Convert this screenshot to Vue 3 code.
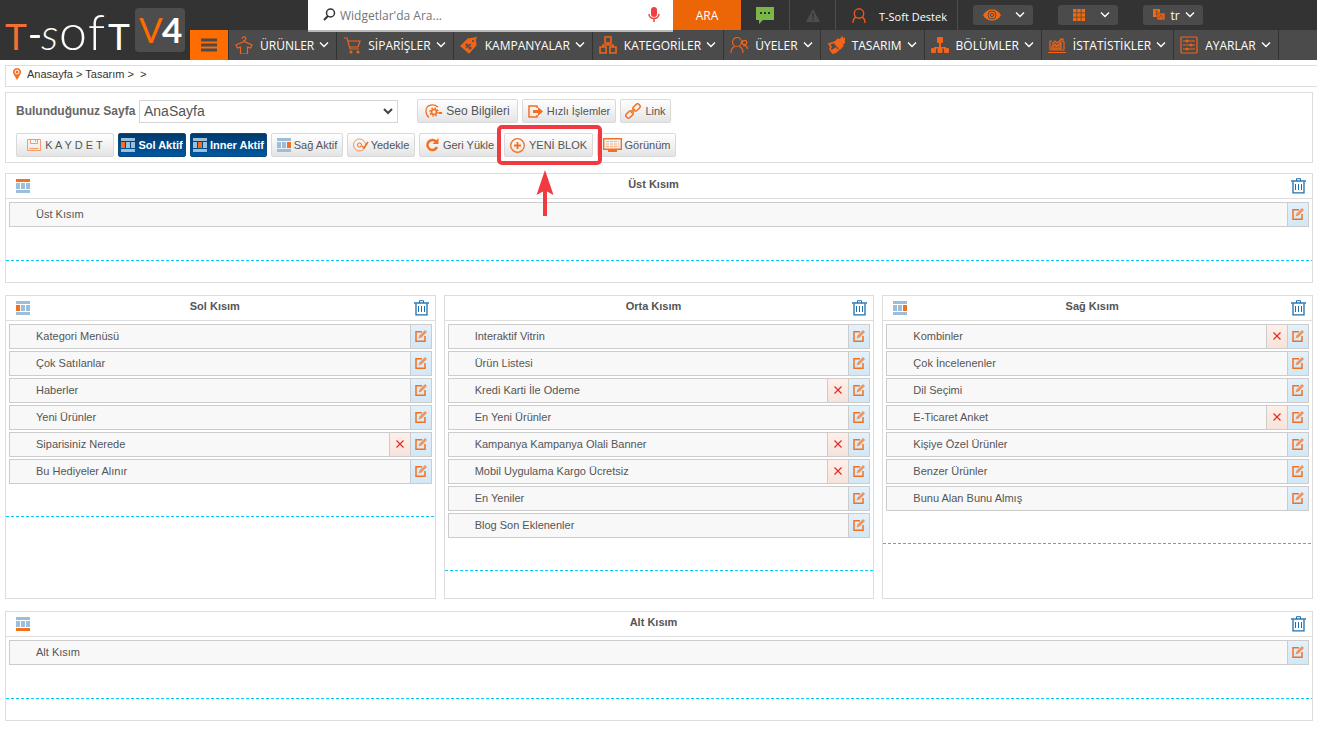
<script setup>
import { ref } from 'vue'

const search = ref('')
const page = ref('AnaSayfa')

const menu = [
  { label: 'ÜRÜNLER', icon: '<path d="M9 5.500V4.500a1.800 1.800 0 1 0-1.800-1.800M9 5.500 1 9l1.500 3 3-1v7h7v-7l3 1L17 9Z"/>' },
  { label: 'SİPARİŞLER', icon: '<path d="M1 2h3l3 11h9M5 5h12l-2 6H6"/><circle cx="8" cy="16" r="1" fill="currentColor"/><circle cx="15" cy="16" r="1" fill="currentColor"/>' },
  { label: 'KAMPANYALAR', icon: '<path fill="currentColor" d="M1 10 8 3l7-1 1 7-7 8Z"/><path d="m12 5 5-4"/><path stroke="#4b4b4b" d="m6 12 5-4"/><circle cx="7" cy="9" r="1" stroke="#4b4b4b"/><circle cx="10" cy="12" r="1" stroke="#4b4b4b"/><circle cx="13" cy="5" r="1" fill="#4b4b4b" stroke="none"/>' },
  { label: 'KATEGORİLER', icon: '<g stroke-width="1.600"><path d="M6 1h6v6H6ZM1 11h6v6H1ZM11 11h6v6h-6ZM9 7v2M4 11V9h10v2"/></g>' },
  { label: 'ÜYELER', icon: '<circle cx="7" cy="6" r="4.500"/><path d="M1 17c0-4 2-6 4-6.500M9 10.500c2 .500 4 2.500 4 6.500"/><circle cx="14.500" cy="6.500" r="2.200"/><path d="M13 10c3-1.500 4.500 1 4.500 3"/>' },
  { label: 'TASARIM', icon: '<path fill="currentColor" d="m8 6 3-3 2 1 2-3 1 2 2-1-1 3 1 1-3 3 1 1-3 3-5-5Z"/><path stroke-width="1.600" d="m8 6-6 2 2 3-1 2 3 4 3-1 4-4"/><path fill="currentColor" d="m4 15 5-3 1 3-4 2Z"/>' },
  { label: 'BÖLÜMLER', icon: '<g fill="currentColor" stroke="none"><rect x="6" y="1" width="6" height="6" rx="1"/><path d="M8 6h2v5h5v3h-2v-1.500H5V14H3v-3h5Z"/><rect x="0" y="12" width="5" height="5" rx="1"/><rect x="6.500" y="12" width="5" height="5" rx="1"/><rect x="13" y="12" width="5" height="5" rx="1"/></g>' },
  { label: 'İSTATİSTİKLER', icon: '<path d="M2 14V5h2M15 6h1v8M0 16.500h18M2 14h14"/><path fill="currentColor" fill-opacity=".6" d="m4 13v-3l3-2 2 2 4-4v7Z"/><path d="m4 8 3-3 2 2 5-4M12 3h3v3"/>' },
  { label: 'AYARLAR', icon: '<rect x="1" y="1" width="16" height="16" rx="1"/><path d="M3 5h3M8 5h7M3 9h7M12 9h3M3 13h3M8 13h7"/><circle cx="7" cy="5" r="1"/><circle cx="11" cy="9" r="1"/><circle cx="7" cy="13" r="1"/>' },
]

const R = (label, removable = false) => ({ label, removable })
const upper = { key: 'top', title: 'Üst Kısım', rows: [R('Üst Kısım')] }
const lower = { key: 'bottom', title: 'Alt Kısım', rows: [R('Alt Kısım')] }
const middle = [
  {
    key: 'left',
    title: 'Sol Kısım',
    rows: [R('Kategori Menüsü'), R('Çok Satılanlar'), R('Haberler'), R('Yeni Ürünler'), R('Siparisiniz Nerede', true), R('Bu Hediyeler Alınır')],
  },
  {
    key: 'none',
    title: 'Orta Kısım',
    rows: [R('Interaktif Vitrin'), R('Ürün Listesi'), R('Kredi Karti İle Odeme', true), R('En Yeni Ürünler'), R('Kampanya Kampanya Olali Banner', true), R('Mobil Uygulama Kargo Ücretsiz', true), R('En Yeniler'), R('Blog Son Eklenenler')],
  },
  {
    key: 'right',
    title: 'Sağ Kısım',
    rows: [R('Kombinler', true), R('Çok İncelenenler'), R('Dil Seçimi'), R('E-Ticaret Anket', true), R('Kişiye Özel Ürünler'), R('Benzer Ürünler'), R('Bunu Alan Bunu Almış')],
  },
]
const groups = [
  { name: 'full', panels: [upper] },
  { name: 'split', panels: middle },
  { name: 'full', panels: [lower] },
]

const parts = [
  { key: 'top', x: 0, y: 0, w: 14, h: 3 },
  { key: 'left', x: 0, y: 4, w: 4, h: 6 },
  { key: 'inner', x: 5, y: 4, w: 4, h: 6 },
  { key: 'right', x: 10, y: 4, w: 4, h: 6 },
  { key: 'bottom', x: 0, y: 11, w: 14, h: 3 },
]
const toggles = [
  { key: 'left', label: 'Sol Aktif', on: true },
  { key: 'inner', label: 'Inner Aktif', on: true },
  { key: 'right', label: 'Sağ Aktif', on: false },
]
</script>

<template>
  <header class="head">
    <a href="#" class="logo" aria-label="T-Soft V4">
      <svg width="190" height="60" viewBox="0 0 190 60" font-family="Lato, sans-serif" font-weight="300" fill="#fff">
        <text x="5" y="50" font-size="37" font-weight="400" fill="#f37032">T</text>
        <rect x="30" y="35" width="10" height="3" rx="1" />
        <text x="41" y="50" font-size="44" font-style="italic">s</text>
        <text x="59" y="50" font-size="50">o</text>
        <text x="88" y="50" font-size="50">f</text>
        <text x="108" y="50" font-size="37" font-weight="400">T</text>
        <rect x="135" y="8" width="50" height="44" rx="4" fill="#4d4d4d" />
        <text x="139" y="43" font-size="35" font-weight="400" fill="#ff6c00">V</text>
        <text x="162" y="43" font-size="35" font-weight="700">4</text>
      </svg>
    </a>
    <div class="bars">
      <div class="topbar">
        <form class="search" @submit.prevent>
          <svg class="glass" width="13" height="14" viewBox="0 0 13 14" fill="none" stroke="#333">
            <circle cx="7.500" cy="5" r="4" stroke-width="1.500" />
            <path d="m5 8-4 4" stroke-width="2" />
          </svg>
          <input v-model="search" type="text" aria-label="Ara" placeholder="Widgetlar'da Ara..." />
          <button type="button" class="mic" aria-label="Sesli arama">
            <svg width="12" height="16" viewBox="0 0 12 16" fill="none" stroke="#ee4040">
              <rect x="3" y="0" width="6" height="10" rx="3" fill="#ee4040" stroke="none" />
              <path d="M1 7c0 6 10 6 10 0M6 11v4" stroke-width="1.500" />
            </svg>
          </button>
        </form>
        <button type="button" class="ara">ARA</button>
        <button type="button" class="cell chat" aria-label="Mesajlar">
          <svg width="18" height="17" viewBox="0 0 18 17">
            <path d="M0 0h18v13H7l-4 4v-4H0Z" fill="#7ab648" />
            <path d="M4 5h2v2H4ZM8 5h2v2H8ZM12 5h2v2h-2Z" fill="#333" />
          </svg>
        </button>
        <button type="button" class="cell warn" aria-label="Uyarılar">
          <svg width="14" height="13" viewBox="0 0 14 13"><path d="M7 0 14 13H0Z" fill="#4d4d4d" /><path d="M6.300 4h1.400v5H6.300ZM6.300 10h1.400v1.400H6.300Z" fill="#333" /></svg>
        </button>
        <a href="#" class="cell user">
          <svg width="14" height="15" viewBox="0 0 14 15" fill="none" stroke="#e9581c" stroke-width="1.400">
            <circle cx="7" cy="5.500" r="4.700" /><path d="M1 15c0-4 1-5 3-6M13 15c0-4-1-5-3-6" />
          </svg>
          <span>T-Soft Destek</span>
        </a>
        <div class="pills">
          <button type="button" class="pill" aria-label="Görünüm seç">
            <svg width="18" height="12" viewBox="0 0 18 12" fill="none" stroke="#f26a10">
              <path d="M0 6C4-1.500 14-1.500 18 6 14 13.500 4 13.500 0 6Z" fill="#f26a10" stroke="none" />
              <circle cx="9" cy="6" r="4" stroke="#4b4b4b" /><circle cx="9" cy="6" r="1.600" stroke="#4b4b4b" />
            </svg>
            <svg class="chev" width="10" height="6" viewBox="0 0 10 6"><path d="m1 .500 4 4 4-4" /></svg>
          </button>
          <button type="button" class="pill" aria-label="Uygulamalar">
            <svg width="12" height="12" viewBox="0 0 12 12" fill="#f26a10"><path d="M0 0h3.500v3.500H0ZM4.200 0h3.500v3.500H4.200ZM8.500 0H12v3.500H8.500ZM0 4.200h3.500v3.500H0ZM4.200 4.200h3.500v3.500H4.200ZM8.500 4.200H12v3.500H8.500ZM0 8.500h3.500V12H0ZM4.200 8.500h3.500V12H4.200ZM8.500 8.500H12V12H8.500Z" /></svg>
            <svg class="chev" width="10" height="6" viewBox="0 0 10 6"><path d="m1 .500 4 4 4-4" /></svg>
          </button>
          <button type="button" class="pill lang">
            <svg width="12" height="12" viewBox="0 0 12 12"><path d="M0 0h7v8H0Z" fill="#f26a10" /><path d="M4 4h8v7H4Z" fill="#e05f18" stroke="#4b4b4b" stroke-width=".5" /><path d="M2 2h3M3.500 2v4M6 9l2-3 2 3" stroke="#4b4b4b" stroke-width=".6" fill="none" /></svg>
            <span>tr</span>
            <svg class="chev" width="10" height="6" viewBox="0 0 10 6"><path d="m1 .500 4 4 4-4" /></svg>
          </button>
        </div>
      </div>
      <nav class="nav">
        <button type="button" class="burger" aria-label="Menü">
          <svg width="16" height="14" viewBox="0 0 16 14" stroke="#4b4b4b" stroke-width="3"><path d="M0 2h16M0 7h16M0 12h16" /></svg>
        </button>
        <a v-for="m in menu" :key="m.label" href="#">
          <svg class="mi" width="18" height="18" viewBox="0 0 18 18" v-html="m.icon"></svg>
          <span>{{ m.label }}</span>
          <svg class="chev" width="10" height="6" viewBox="0 0 10 6"><path d="m1 .500 4 4 4-4" /></svg>
        </a>
      </nav>
    </div>
  </header>

  <div class="crumbs">
    <svg width="8" height="12" viewBox="0 0 8 12"><path d="M4 12 .500 6a4 4 0 1 1 7 0Z" fill="#f37021" /><circle cx="4" cy="4" r="2" fill="none" stroke="#fff" /></svg>
    <a href="#">Anasayfa</a> <span>&gt;</span> <a href="#">Tasarım</a> <span>&gt;</span> <span class="last">&gt;</span>
  </div>

  <main>
    <section class="tools">
      <div class="line">
        <label for="page">Bulunduğunuz Sayfa</label>
        <div class="pick">
          <select id="page" v-model="page"><option>AnaSayfa</option></select>
          <svg width="10" height="7" viewBox="0 0 10 7" fill="none" stroke="#444" stroke-width="2"><path d="m1 1 4 4 4-4" /></svg>
        </div>
        <button type="button" class="btn seo">
          <svg width="18" height="14" viewBox="0 0 18 14" fill="none" stroke="#f37021">
            <path d="M13 3C9-.500 1 0 1 7c0 3 1 5 3 6.500" stroke-width="1.200" />
            <circle cx="9" cy="8" r="2.500" stroke-width="1.600" /><circle cx="9" cy="8" r="4" stroke-width="1.500" stroke-dasharray="1.600 1.540" />
            <path d="M14 9h3" stroke-width="2" />
          </svg>Seo Bilgileri
        </button>
        <button type="button" class="btn fast">
          <svg width="15" height="13" viewBox="0 0 15 13" fill="none" stroke="#f37021" stroke-width="1.500">
            <path d="M9 3V1H1v11h8v-2" /><path d="M5 5h5V2l5 4.500-5 4.500V8H5Z" fill="#f37021" stroke="none" />
          </svg>Hızlı İşlemler
        </button>
        <button type="button" class="btn link">
          <svg width="16" height="16" viewBox="0 0 16 16" fill="none" stroke="#f37021" stroke-width="1.500">
            <rect x="-4" y="-2.500" width="8" height="5" rx="2.500" transform="translate(4.500 11.500) rotate(-45)" />
            <rect x="-4" y="-2.500" width="8" height="5" rx="2.500" transform="translate(11.500 4.500) rotate(-45)" /><path d="m6 10 4-4" />
          </svg>Link
        </button>
      </div>
      <div class="line">
        <button type="button" class="btn save">
          <svg width="14" height="12" viewBox="0 0 14 12" fill="none" stroke="#f79a68"><path d="M.500.500h13v11H.500ZM3.500.500v4h7v-4M8.500 1v2M2.500 9.500h9" /></svg>K A Y D E T
        </button>
        <button v-for="t in toggles" :key="t.key" type="button" class="btn tog" :class="[t.key, { on: t.on }]" :aria-pressed="t.on">
          <svg width="14" height="14" viewBox="0 0 14 14">
            <rect v-for="p in parts" :key="p.key" :x="p.x" :y="p.y" :width="p.w" :height="p.h" :fill="p.key === t.key ? '#f37021' : '#9abedb'" />
          </svg>{{ t.label }}
        </button>
        <button type="button" class="btn backup">
          <svg width="16" height="14" viewBox="0 0 16 14" fill="none" stroke="#f37021">
            <circle cx="6.500" cy="7" r="6" stroke-opacity=".7" /><circle cx="6.500" cy="7" r="2" /><path d="M9 8l2 2 4-6" stroke-width="1.600" />
          </svg>Yedekle
        </button>
        <button type="button" class="btn undo">
          <svg width="14" height="14" viewBox="0 0 14 14" fill="none" stroke="#f37021"><path d="M11 3.500A5 5 0 1 0 12 9" stroke-width="2.500" /><path d="M13.500 0v6h-6Z" fill="#f37021" stroke="none" /></svg>Geri Yükle
        </button>
        <div class="new">
          <button type="button" class="btn add">
            <svg width="15" height="15" viewBox="0 0 15 15" fill="none" stroke="#f37021"><circle cx="7.500" cy="7.500" r="6.800" stroke-width="1.300" /><path d="M7.500 4v7M4 7.500h7" stroke-width="1.800" /></svg>YENİ BLOK
          </button>
          <div class="mark"></div>
          <svg class="arrow" width="18" height="46" viewBox="0 0 18 46" fill="#f03a3f"><path d="M9 0 17.500 25 11 21.500V46H7V21.500L.500 25Z" /></svg>
        </div>
        <button type="button" class="btn view">
          <svg width="19" height="14" viewBox="0 0 19 14" fill="none" stroke="#f37021"><path d="M.700.700h17.600v10.600H.700Z" stroke-width="1.400" /><path d="M3 3.500h13M3 6h13M3 8.500h13" stroke-opacity=".5" stroke-dasharray="3 1" /><path d="M5 13h9" stroke-width="2" /></svg>Görünüm
        </button>
      </div>
    </section>

    <div v-for="(g, i) in groups" :key="i" class="group" :class="g.name">
      <section v-for="s in g.panels" :key="s.key" class="panel">
        <div class="phead">
          <svg width="14" height="14" viewBox="0 0 14 14">
            <template v-if="s.key !== 'none'">
              <rect v-for="p in parts" :key="p.key" :x="p.x" :y="p.y" :width="p.w" :height="p.h" :fill="p.key === s.key ? '#f37021' : '#9abedb'" />
            </template>
          </svg>
          <h2>{{ s.title }}</h2>
          <button type="button" class="trash" :aria-label="s.title + ' temizle'">
            <svg width="15" height="16" viewBox="0 0 15 16" fill="none" stroke="#1c6fae"><path d="M0 3h15" stroke-width="1.400" /><path d="M5.500 3V.700h4V3" /><path d="M2 3.500v11.300h11V3.500" stroke-width="1.300" /><path d="M4.500 6v6M7.500 6v6M10.500 6v6" /></svg>
          </button>
        </div>
        <ul>
          <li v-for="r in s.rows" :key="r.label">
            <span>{{ r.label }}</span>
            <button v-if="r.removable" type="button" class="del" :aria-label="r.label + ' sil'">
              <svg width="8" height="8" viewBox="0 0 8 8" stroke="#e32b22" stroke-width="1.200"><path d="m.500.500 7 7M7.500.500l-7 7" /></svg>
            </button>
            <button type="button" class="edit" :aria-label="r.label + ' düzenle'">
              <svg width="12" height="12" viewBox="0 0 12 12" fill="none" stroke="#f37021"><path d="M7 1.700H1v9.500h9V6" stroke-width="1.500" /><path d="m3.500 8.500 1-3L10 0l2 2-5.500 5.500Z" fill="#f37021" fill-opacity=".7" stroke="none" /></svg>
            </button>
          </li>
        </ul>
        <div class="drop"></div>
      </section>
    </div>
  </main>
</template>

<style>
body {
  background: #fff;
  font-family: "Liberation Sans", Arial, sans-serif;
  font-size: 11px;
  color: #555;
}
</style>

<style scoped>
* { box-sizing: border-box; }
button { font: inherit; color: inherit; border: 0; background: none; padding: 0; }
a { color: inherit; text-decoration: none; }
svg { display: block; flex: none; }
.head { display: flex; height: 60px; background: #333; font-family: "Open Sans", sans-serif; color: #fff; }
.logo { width: 190px; flex: none; }
.bars { flex: 1; min-width: 0; }
.topbar { display: flex; height: 30px; padding-left: 118px; }
.search { position: relative; z-index: 1; display: flex; align-items: center; width: 365px; height: 32px; padding: 0 13px 0 15px; background: #fff; border-bottom: 2px solid #b9b9b9; }
.search input { flex: 1; min-width: 0; border: 0; outline: 0; padding: 0 0 0 4px; background: none; font: 12px "Open Sans", sans-serif; color: #444; }
.search input::placeholder { color: #757575; opacity: 1; }
.ara { width: 68px; background: #ec6608; font-size: 12px; }
.cell { display: flex; align-items: center; justify-content: center; border-right: 1px solid #4d4d4d; }
.chat { width: 49px; }
.warn { width: 46px; }
.user { justify-content: flex-end; width: 122px; gap: 13px; padding-right: 10px; font-size: 11px; }
.user span { padding-top: 3px; }
.pills { display: flex; align-items: center; gap: 25px; padding-left: 15px; }
.pill { display: flex; align-items: center; justify-content: space-between; width: 60px; height: 20px; padding: 0 8px 0 10px; border-radius: 3px; background: #4b4b4b; font-size: 12px; }
.pill:nth-child(2) { padding-left: 15px; }
.chev { fill: none; stroke: #fff; stroke-width: 1.400; }
.nav { display: flex; height: 30px; background: #4b4b4b; }
.burger { display: flex; flex: none; align-items: center; justify-content: center; width: 39px; background: #ff6c00; border-right: 1px solid #333; }
.nav a { display: flex; align-items: center; padding: 0 7px 0 6px; border-right: 1px solid #333; font-size: 12px; }
.nav a span { margin: 0 5px 0 7px; }
.mi { fill: none; stroke: currentColor; stroke-width: 1.200; color: #f26419; }
.crumbs { display: flex; align-items: center; height: 22px; margin: 5px 0 0 5px; padding: 0 0 4px 7px; border: 1px solid #ddd; border-right: 0; color: #333; gap: 3px; }
.crumbs svg { margin-right: 3px; }
.crumbs .last { margin-left: 3px; }
main { padding: 5px 4px 9px 5px; }
.tools { display: flex; flex-direction: column; gap: 10px; height: 71px; padding: 6px 10px 5px; border: 1px solid #ddd; }
.line { display: flex; align-items: center; gap: 4px; height: 24px; }
label { font-size: 12px; font-weight: bold; color: #666; width: 119px; white-space: nowrap; }
.pick { position: relative; width: 259px; height: 23px; margin-right: 15px; }
.pick select { width: 100%; height: 100%; padding: 0 4px; appearance: none; border: 1px solid #d5d5d5; border-radius: 0; background: #fff; color: #555; font: 14px "Liberation Sans", Arial, sans-serif; }
.pick svg { position: absolute; right: 5px; top: 8px; pointer-events: none; }
.btn { display: flex; align-items: center; justify-content: center; height: 24px; gap: 4px; padding: 0; border: 1px solid #d9d9d9; border-radius: 2px; background: linear-gradient(#fff, #e4e4e4); color: #555; white-space: nowrap; }
.seo { width: 101px; gap: 3px; font-size: 12px; }
.fast { width: 94px; }
.link { width: 51px; }
.save { width: 98px; }
.tog { width: 68px; gap: 3px; }
.tog.inner { width: 77px; }
.tog.right { width: 72px; }
.tog.on { background: linear-gradient(#003a6b, #0058a0); border-color: #0a4a80; color: #fff; font-weight: bold; }
.backup { width: 68px; gap: 2px; }
.undo { width: 81px; }
.add { width: 89px; }
.view { width: 79px; gap: 3px; }
.new { position: relative; }
.mark { position: absolute; left: -7px; top: -8px; width: 105px; height: 40px; border: 4px solid #f03a3f; border-radius: 5px; z-index: 1; }
.arrow { position: absolute; left: 32px; top: 37px; z-index: 1; }
.group { display: grid; gap: 8px; margin-top: 12px; }
.tools + .group { margin-top: 10px; }
.split { grid-template-columns: 1fr 1fr 1fr; }
.panel { border: 1px solid #ddd; padding-bottom: 21px; }
.split .panel { padding-bottom: 27px; }
.phead { display: flex; align-items: center; height: 25px; padding: 0 6px 0 10px; border-bottom: 1px solid #ddd; }
h2 { flex: 1; margin: 0; padding: 0 14px 5px 0; text-align: center; font-size: 11px; }
ul { display: grid; gap: 2px; margin: 0; padding: 3px 3px 33px; list-style: none; }
.split ul { padding-bottom: 32px; }
li { display: flex; height: 25px; border: 1px solid #ccc; background: #f8f8f8; }
li span { flex: 1; padding-left: 26px; line-height: 22px; }
li button { display: flex; align-items: center; justify-content: center; width: 21px; padding-bottom: 1px; border-left: 1px solid #ccc; }
.edit { background: linear-gradient(#e3f1fb, #d3e7f5); }
.del { background: linear-gradient(#ffefe8, #f6e4dc); }
.drop { height: 1px; background: repeating-linear-gradient(90deg, #00ccff 0 3px, transparent 3px 5px); }
</style>
